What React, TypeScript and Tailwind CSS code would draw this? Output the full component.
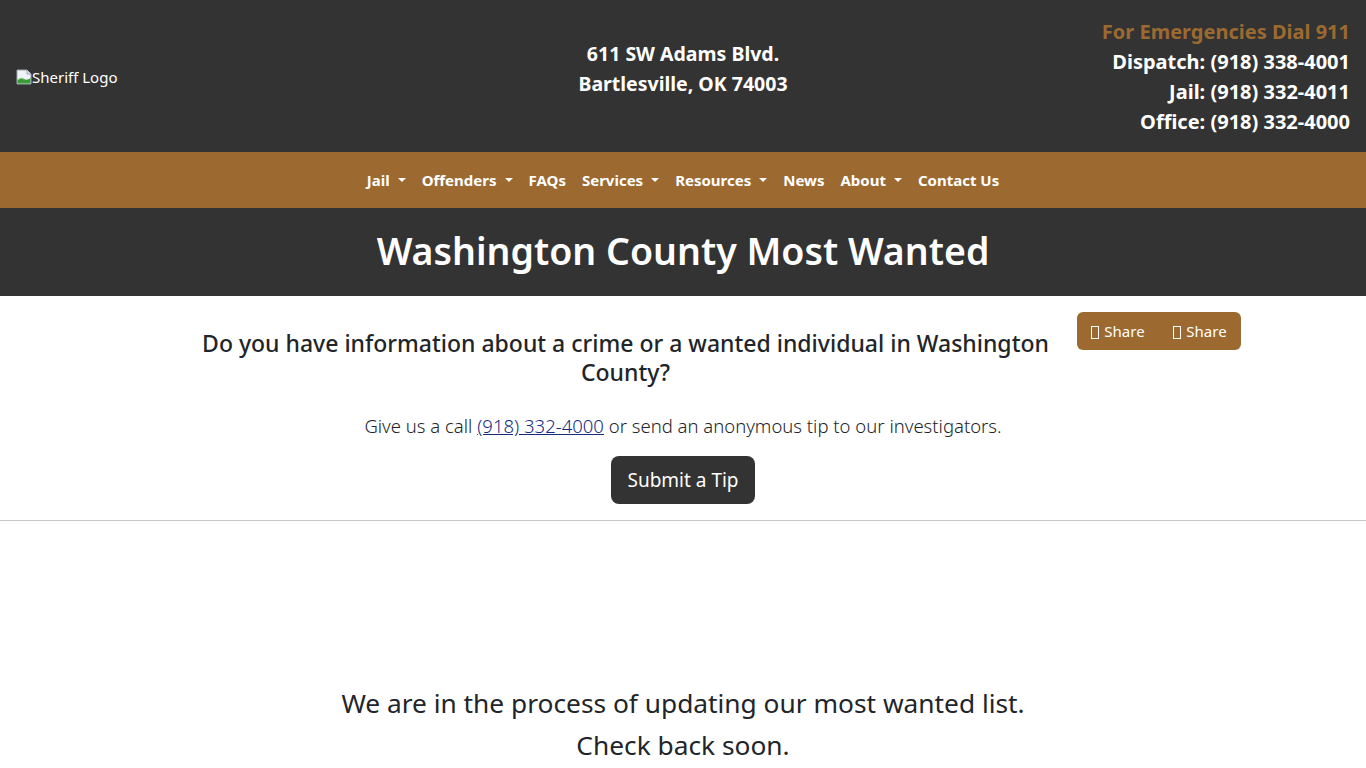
import React from 'react';

const navItems = [
  { label: 'Jail', caret: true },
  { label: 'Offenders', caret: true },
  { label: 'FAQs', caret: false },
  { label: 'Services', caret: true },
  { label: 'Resources', caret: true },
  { label: 'News', caret: false },
  { label: 'About', caret: true },
  { label: 'Contact Us', caret: false },
];

function BrokenImage() {
  return (
    <svg width="16" height="16" viewBox="0 0 16 16" className="shrink-0">
      <path d="M1 1h10l4 4v10H1z" fill="#eef3f8" stroke="#9aa5b1" strokeWidth="1" />
      <path d="M11 1v4h4" fill="#dfe6ee" stroke="#9aa5b1" strokeWidth="1" />
      <path d="M1.5 14.5 L1.5 11 Q5 8 8 10 Q11 12 14.5 9 L14.5 14.5z" fill="#3f9b3a" />
      <path d="M1.5 11 Q5 8 8 10" fill="none" stroke="#7fcf6a" strokeWidth="1" />
    </svg>
  );
}

function Tofu() {
  return <span className="inline-block w-[8px] h-[13px] border border-current mr-[5px] translate-y-[1px]" />;
}

export default function App() {
  return (
    <div className="min-h-screen bg-white font-['Noto_Sans','Open_Sans',sans-serif] text-[#212529]">
      {/* top header */}
      <header className="bg-[#333333] h-[152px] grid grid-cols-3 px-4">
        <div className="self-center flex items-center text-white text-[15px] leading-6 mt-[1px]">
          <BrokenImage />
          <span>Sheriff Logo</span>
        </div>
        <div className="pt-[39px] text-center text-white font-bold text-[19.5px] leading-[30px]">
          <div>611 SW Adams Blvd.</div>
          <div>Bartlesville, OK 74003</div>
        </div>
        <div className="pt-[17px] text-right font-bold text-[20px] leading-[30px] text-white">
          <div className="text-[#9c6a30]">For Emergencies Dial 911</div>
          <div>Dispatch: (918) 338-4001</div>
          <div>Jail: (918) 332-4011</div>
          <div>Office: (918) 332-4000</div>
        </div>
      </header>

      {/* nav */}
      <nav className="bg-[#9c6a30] h-[56px] flex items-center justify-center">
        <ul className="flex items-center">
          {navItems.map((item) => (
            <li key={item.label}>
              <a href="#" className="flex items-center px-2 text-white font-bold text-[15px] leading-6">
                {item.label}
                {item.caret && (
                  <span className="ml-[8px] inline-block w-0 h-0 border-x-[4px] border-x-transparent border-t-[4px] border-t-white" />
                )}
              </a>
            </li>
          ))}
        </ul>
      </nav>

      {/* title band */}
      <div className="bg-[#333333] h-[88px] flex items-center justify-center">
        <h1 className="text-white text-[37.5px] font-semibold leading-[1.2] -mt-[3px]">Washington County Most Wanted</h1>
      </div>

      {/* tip section */}
      <section className="border-b border-[#c8c8c8]">
        <div className="max-w-[1140px] mx-auto px-3 pt-4 pb-4">
          <div className="flex items-start">
            <h4 className="ml-[65px] w-[871px] mt-[17px] text-center text-[23px] font-medium leading-[29px]">
              Do you have information about a crime or a wanted individual in Washington County?
            </h4>
            <div className="ml-auto flex h-[38px] rounded-md bg-[#9c6a30] text-white text-[15px]">
              <button className="w-[82px] flex items-center justify-center">
                <Tofu />
                Share
              </button>
              <button className="w-[82px] flex items-center justify-center">
                <Tofu />
                Share
              </button>
            </div>
          </div>
          <p className="mt-[24px] text-center text-[18.5px] font-light leading-[30px]">
            Give us a call{' '}
            <a href="#" className="underline text-[#172b82]">
              (918) 332-4000
            </a>{' '}
            or send an anonymous tip to our investigators.
          </p>
          <div className="mt-[15px] flex justify-center">
            <button className="h-[48px] w-[144px] rounded-lg bg-[#333333] text-white text-[19px]">Submit a Tip</button>
          </div>
        </div>
      </section>

      {/* status */}
      <div className="pt-[161px] text-center text-[26.3px] leading-[42px]">
        <p>We are in the process of updating our most wanted list.</p>
        <p>Check back soon.</p>
      </div>
    </div>
  );
}
